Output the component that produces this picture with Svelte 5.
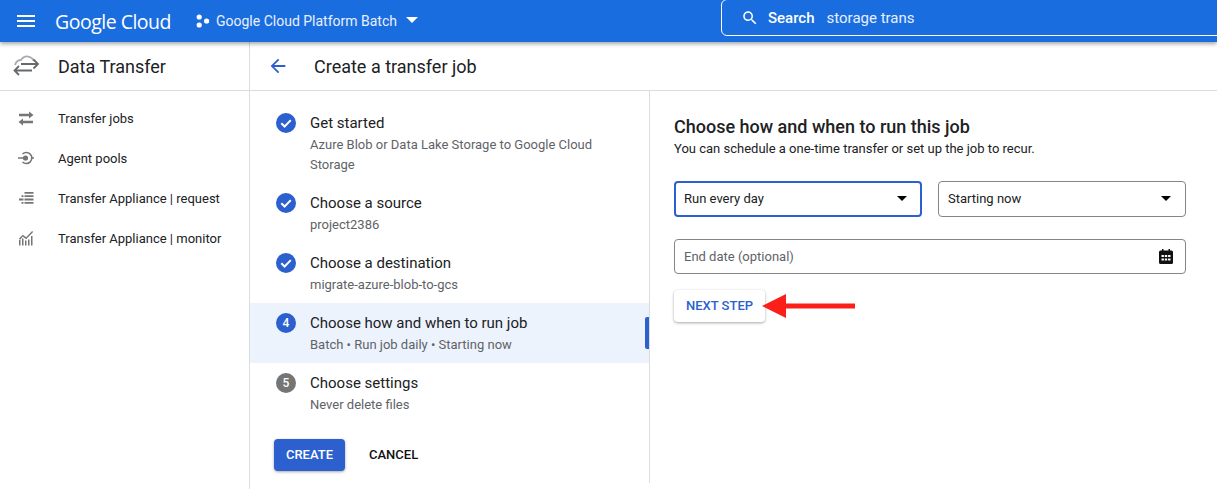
<script lang="ts">
  const navItems = [
    { label: "Transfer jobs", icon: "swap" },
    { label: "Agent pools", icon: "agent" },
    { label: "Transfer Appliance | request", icon: "list" },
    { label: "Transfer Appliance | monitor", icon: "chart" }
  ];

  const steps = [
    { title: "Get started", sub: ["Azure Blob or Data Lake Storage to Google Cloud", "Storage"], state: "done" },
    { title: "Choose a source", sub: ["project2386"], state: "done" },
    { title: "Choose a destination", sub: ["migrate-azure-blob-to-gcs"], state: "done" },
    { title: "Choose how and when to run job", sub: ["Batch • Run job daily • Starting now"], state: "active", num: 4 },
    { title: "Choose settings", sub: ["Never delete files"], state: "todo", num: 5 }
  ];
</script>

<div class="page">
  <header class="topbar">
    <svg class="menu" viewBox="0 0 24 24" width="24" height="24"><path d="M3 18h18v-2H3v2zm0-5h18v-2H3v2zm0-7v2h18V6H3z" /></svg>
    <span class="logo">Google Cloud</span>
    <svg class="dots" viewBox="0 0 14 14" width="14" height="14">
      <circle cx="3.2" cy="3" r="2.6" />
      <circle cx="3.2" cy="11" r="2.6" />
      <circle cx="10.6" cy="7" r="2.6" />
    </svg>
    <span class="project">Google Cloud Platform Batch</span>
    <svg class="caret" viewBox="0 0 12 6" width="12" height="6"><path d="M0 0h12L6 6z" /></svg>
    <div class="search">
      <svg viewBox="0 0 24 24" width="18" height="18"><path d="M15.5 14h-.79l-.28-.27C15.41 12.59 16 11.11 16 9.5 16 5.91 13.09 3 9.5 3S3 5.91 3 9.5 5.91 16 9.5 16c1.61 0 3.09-.59 4.23-1.57l.27.28v.79l5 4.99L20.49 19l-4.99-5zm-6 0C7.01 14 5 11.99 5 9.5S7.01 5 9.5 5 14 7.01 14 9.5 11.99 14 9.5 14z" /></svg>
      <span class="search-label">Search</span>
      <span class="search-text">storage trans</span>
    </div>
  </header>

  <div class="body">
    <aside class="sidebar">
      <div class="side-head">
        <svg class="product" viewBox="0 0 28 24" width="28" height="24" fill="none" stroke="#666a6e" stroke-width="1.8">
          <path d="M2 11C3 7.500 5.500 6 8 6c2-3 5-4 7.500-3.300C18 3.300 20 5 21 7" stroke="#a9acaf" />
          <path d="M8 10h17M20.500 5.500L25 10l-4.500 4.500" />
          <path d="M19 16.500H1.500M6 12l-4.500 4.500L6 21" />
        </svg>
        <span>Data Transfer</span>
      </div>
      <nav class="nav">
        {#each navItems as item}
          <div class="nav-item">
            <svg viewBox="0 0 18 18" width="18" height="18" fill="#757575">
              {#if item.icon === "swap"}
                <path d="M2 4.800h10V2.500L16.500 6 12 9.500V7.200H2zM16 11.800H6V9.500L1.500 13 6 16.500v-2.300h10z" />
              {:else if item.icon === "agent"}
                <path d="M1 8.200h5v1.600H1zM14 8.200h3v1.600h-3z" />
                <circle cx="8.500" cy="9" r="2.600" />
                <path d="M5.500 5a5.500 5.500 0 1 1 0 8" fill="none" stroke="#757575" stroke-width="1.500" />
              {:else if item.icon === "list"}
                <path d="M7.500 3h9v1.800h-9zM7.500 6.300h9v1.800h-9zM7.500 9.600h9v1.800h-9zM7.500 12.900h9v1.800h-9zM4.500 6.300h2v1.800h-2zM2 9.600h4.500v1.800H2zM4.500 12.900h2v1.800h-2z" />
              {:else}
                <path d="M2 11h1.500v5.500H2zM5 9.500h1.500v7H5zM8 11.500h1.500v5H8zM11 10.500h1.500v6H11zM14 7h1.500v9.500H14z" />
                <path d="M2 9.500l3.800-3.800 3.300 2.600 6-6.300 1 1-7 7.200-3.300-2.600L3 11z" />
              {/if}
            </svg>
            <span>{item.label}</span>
          </div>
        {/each}
      </nav>
    </aside>

    <main class="main">
      <div class="main-head">
        <svg viewBox="0 0 24 24" width="22" height="22"><path d="M20 11H7.830l5.590-5.590L12 4l-8 8 8 8 1.410-1.410L7.830 13H20v-2z" /></svg>
        <h1>Create a transfer job</h1>
      </div>

      <div class="columns">
        <section class="stepper">
          <ol class="steps">
            {#each steps as step}
              <li class="step" class:active={step.state === "active"}>
                {#if step.state === "done"}
                  <svg class="badge" viewBox="0 0 20 20" width="20" height="20">
                    <circle cx="10" cy="10" r="10" fill="#2c60cf" />
                    <path d="M5.300 10.300l3.300 3.200 6.200-6.400" fill="none" stroke="#fff" stroke-width="2" />
                  </svg>
                {:else}
                  <span class="badge num" class:todo={step.state === "todo"}>{step.num}</span>
                {/if}
                <div class="step-text">
                  <div class="step-title">{step.title}</div>
                  {#each step.sub as line}
                    <div class="step-sub">{line}</div>
                  {/each}
                </div>
              </li>
            {/each}
          </ol>
          <div class="actions">
            <button class="create">CREATE</button>
            <button class="cancel">CANCEL</button>
          </div>
        </section>

        <section class="form">
          <h2>Choose how and when to run this job</h2>
          <p>You can schedule a one-time transfer or set up the job to recur.</p>

          <div class="row">
            <div class="field focus">
              <span>Run every day</span>
              <svg viewBox="0 0 10 5" width="10" height="5"><path d="M0 0h10L5 5z" /></svg>
            </div>
            <div class="field">
              <span>Starting now</span>
              <svg viewBox="0 0 10 5" width="10" height="5"><path d="M0 0h10L5 5z" /></svg>
            </div>
          </div>

          <div class="field date">
            <span>End date (optional)</span>
            <svg viewBox="0 0 14 15" width="14" height="15">
              <path fill="#111" fill-rule="evenodd" d="M3 0h1.500v1.500h5V0H11v1.500h1.500A1.500 1.500 0 0 1 14 3v10.500a1.500 1.500 0 0 1-1.500 1.500h-11A1.500 1.500 0 0 1 0 13.500V3a1.500 1.500 0 0 1 1.500-1.500H3zM2.500 6v2h2.400V6zM5.800 6v2h2.400V6zM9.100 6v2h2.400V6zM2.500 9.500v2h2.400v-2zM5.800 9.500v2h2.400v-2zM9.100 9.500v2h2.400v-2z" />
            </svg>
          </div>

          <div class="next-row">
            <button class="next">NEXT STEP</button>
            <svg class="arrow" viewBox="0 0 93 24" width="93" height="24">
              <path d="M0 12 24 0v9.500h69v5H24V24z" fill="#fb1f1a" />
            </svg>
          </div>
        </section>
      </div>
    </main>
  </div>
</div>

<style>
  :global(body) {
    margin: 0;
    overflow: hidden;
    background: #fff;
    font-family: Roboto, "Liberation Sans", sans-serif;
  }

  .page {
    height: 489px;
    display: flex;
    flex-direction: column;
    color: #202124;
  }

  /* top bar */
  .topbar {
    position: relative;
    z-index: 2;
    flex: 0 0 42px;
    display: flex;
    align-items: center;
    background: #1a6ddf;
    color: #fff;
    box-shadow: 0 2px 4px rgba(0, 0, 0, 0.35);
    padding-left: 14px;
  }

  .topbar svg {
    fill: #fff;
  }

  .logo {
    margin-left: 17px;
    font-family: "Open Sans", sans-serif;
    font-size: 19.500px;
    letter-spacing: -0.5px;
    width: 141px;
    white-space: nowrap;
  }

  .dots {
    flex: none;
  }

  .project {
    margin-left: 6px;
    font-size: 14px;
    color: #e8f0fd;
    white-space: nowrap;
  }

  .caret {
    margin: 0 0 2px 9px;
  }

  .search {
    position: absolute;
    left: 721px;
    top: -1px;
    right: -10px;
    height: 34px;
    border: 1px solid #fff;
    border-radius: 6px;
    display: flex;
    align-items: center;
    padding: 1px 0 0 19px;
    font-size: 15px;
  }

  .search-label {
    margin-left: 9px;
    font-weight: 500;
  }

  .search-text {
    margin-left: 12px;
    color: #e8f0fd;
  }

  .body {
    flex: 1;
    display: flex;
    min-height: 0;
  }

  /* left nav */
  .sidebar {
    width: 249px;
    border-right: 1px solid #dadce0;
    flex: none;
  }

  .side-head {
    height: 48px;
    border-bottom: 1px solid #dadce0;
    display: flex;
    align-items: center;
    padding-left: 13px;
    gap: 17px;
    font-size: 18px;
  }

  .nav {
    padding-top: 7px;
  }

  .nav-item {
    height: 40px;
    display: flex;
    align-items: center;
    padding-left: 17px;
    gap: 23px;
    font-size: 13px;
  }

  .main {
    flex: 1;
    min-width: 0;
  }

  .main-head {
    height: 48px;
    border-bottom: 1px solid #dadce0;
    display: flex;
    align-items: center;
    padding-left: 17px;
    gap: 25px;
  }

  .main-head svg {
    fill: #2c60cf;
  }

  h1 {
    margin: 0;
    font-size: 18px;
    font-weight: 400;
  }

  .columns {
    display: flex;
  }

  /* stepper */
  .stepper {
    width: 399px;
    height: 392px;
    flex: none;
    border-right: 1px solid #dadce0;
  }

  .steps {
    list-style: none;
    margin: 0;
    padding: 12px 0 0;
  }

  .step {
    position: relative;
    display: flex;
    gap: 14px;
    padding: 10px 24px 8px 26px;
  }

  .step.active {
    background: #edf3fd;
  }

  .step.active::after {
    content: "";
    position: absolute;
    right: 0;
    top: 14px;
    width: 4px;
    height: 32px;
    border-radius: 2px 0 0 2px;
    background: #2c60cf;
  }

  .badge {
    flex: none;
    width: 20px;
    height: 20px;
  }

  .num {
    border-radius: 50%;
    background: #2c60cf;
    color: #fff;
    font-size: 12px;
    font-weight: 500;
    display: flex;
    align-items: center;
    justify-content: center;
  }

  .num.todo {
    background: #757575;
  }

  .step-title {
    font-size: 15px;
    line-height: 20px;
    margin-bottom: 2px;
  }

  .step-sub {
    font-size: 13px;
    line-height: 20px;
    color: #5f6368;
  }

  .actions {
    display: flex;
    align-items: center;
    gap: 24px;
    padding: 16px 0 0 24px;
  }

  button {
    font: inherit;
    font-size: 13px;
    font-weight: 500;
    border: none;
    background: none;
    padding: 0 0 1px;
  }

  .create {
    width: 71px;
    height: 32px;
    border-radius: 4px;
    background: #2c60cf;
    color: #fff;
    box-shadow: 0 1px 3px rgba(0, 0, 0, 0.35);
  }

  .cancel {
    color: #111;
  }

  /* form */
  .form {
    flex: 1;
    padding: 26px 31px 0 24px;
  }

  h2 {
    margin: 0;
    font-size: 18px;
    line-height: 20px;
    font-weight: 500;
  }

  .form p {
    margin: 3px 0 0;
    font-size: 13px;
    line-height: 18px;
  }

  .row {
    display: flex;
    gap: 16px;
    margin-top: 23px;
  }

  .field {
    flex: 1;
    height: 36px;
    box-sizing: border-box;
    border: 1px solid #80868b;
    border-radius: 4px;
    display: flex;
    align-items: center;
    justify-content: space-between;
    padding: 0 14px 1px 9px;
    font-size: 13px;
  }

  .field.focus {
    border: 2px solid #2c60cf;
    padding: 0 13px 1px 8px;
  }

  .field.date {
    height: 35px;
    margin-top: 22px;
    color: #5f6368;
    padding: 0 12px 0 9px;
  }

  .next-row {
    position: relative;
    margin-top: 16px;
  }

  .next {
    width: 91px;
    height: 32px;
    border-radius: 4px;
    background: #fff;
    color: #2c60cf;
    box-shadow: 0 1px 3px rgba(0, 0, 0, 0.35);
  }

  .arrow {
    position: absolute;
    left: 88px;
    top: 4px;
  }
</style>
